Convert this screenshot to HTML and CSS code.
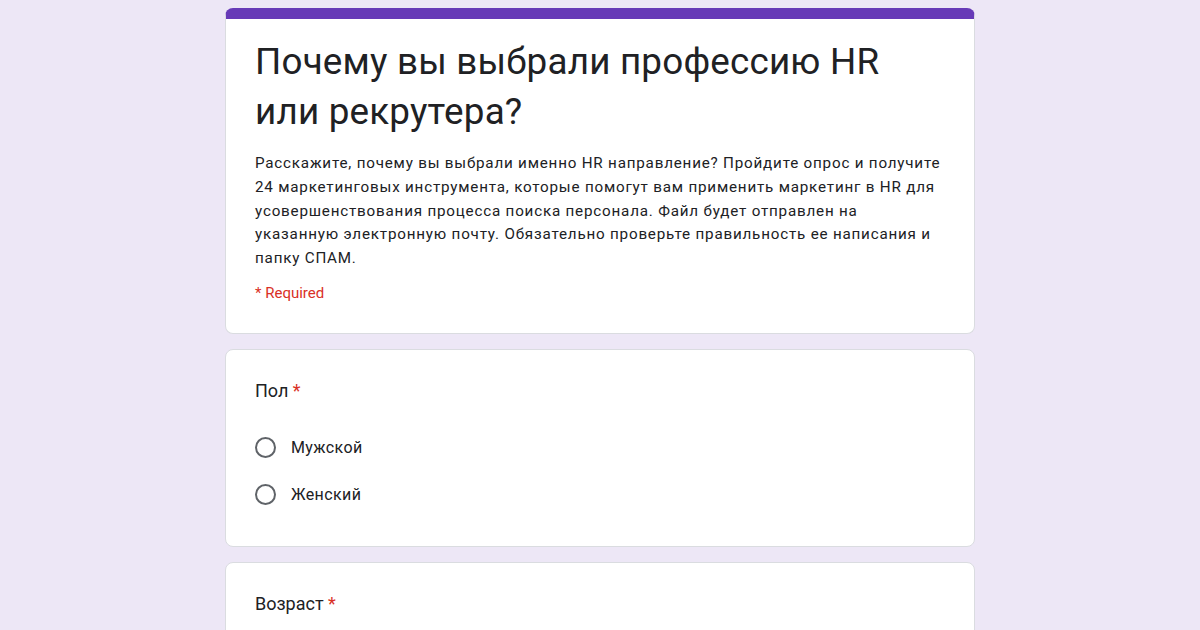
FILE: index.html
```html
<!DOCTYPE html>
<html lang="ru">

<head>
    <meta charset="UTF-8">
    <meta name="viewport" content="width=device-width, initial-scale=1.0">
    <title>Почему вы выбрали профессию HR или рекрутера?</title>
    <link rel="stylesheet" href="styles.css">
</head>

<body>
    <div class="form">
        <div class="card header-card">
            <h1 class="form-title">Почему вы выбрали профессию HR или рекрутера?</h1>
            <p class="form-desc">Расскажите, почему вы выбрали именно HR направление? Пройдите опрос и получите 24 маркетинговых инструмента, которые помогут вам применить маркетинг в HR для усовершенствования процесса поиска персонала. Файл будет отправлен на указанную электронную почту. Обязательно проверьте правильность ее написания и папку СПАМ.</p>
            <div class="required-note">* Required</div>
        </div>

        <div class="card question">
            <div class="q-title">Пол <span class="star">*</span></div>
            <label class="option"><span class="radio"></span>Мужской</label>
            <label class="option"><span class="radio"></span>Женский</label>
        </div>

        <div class="card question">
            <div class="q-title">Возраст <span class="star">*</span></div>
        </div>
    </div>
</body>

</html>
```

FILE: styles.css
```css
body {
    margin: 0;
    background-color: #ede7f6;
    font-family: Roboto, 'Noto Sans', sans-serif;
    color: #202124;
}

.form {
    width: 750px;
    margin: 8px auto 0;
    display: flex;
    flex-direction: column;
    gap: 15px;
}

.card {
    background-color: white;
    border: 1px solid #dadce0;
    border-radius: 8px;
    padding: 0 29px;
}

.header-card {
    border-top: 11px solid #673ab7;
    padding-top: 18px;
    padding-bottom: 31px;
}

.form-title {
    margin: 0;
    font-weight: 400;
    font-size: 36.8px;
    line-height: 50px;
    letter-spacing: 0.2px;
    width: 660px;
}

.form-desc {
    margin: 15px 0 0;
    font-size: 15.2px;
    line-height: 23.8px;
    letter-spacing: 0.8px;
}

.required-note {
    margin-top: 13px;
    color: #d93025;
    font-size: 15px;
}

.question {
    padding-top: 28px;
    padding-bottom: 28px;
}

.q-title {
    font-size: 18px;
    line-height: 26px;
    margin-bottom: 20px;
}

.star {
    color: #d93025;
}

.option {
    display: flex;
    align-items: center;
    gap: 15px;
    height: 47px;
    font-size: 16px;
    letter-spacing: 0.4px;
}

.radio {
    width: 17px;
    height: 17px;
    border: 2px solid #5f6368;
    border-radius: 50%;
}
```
